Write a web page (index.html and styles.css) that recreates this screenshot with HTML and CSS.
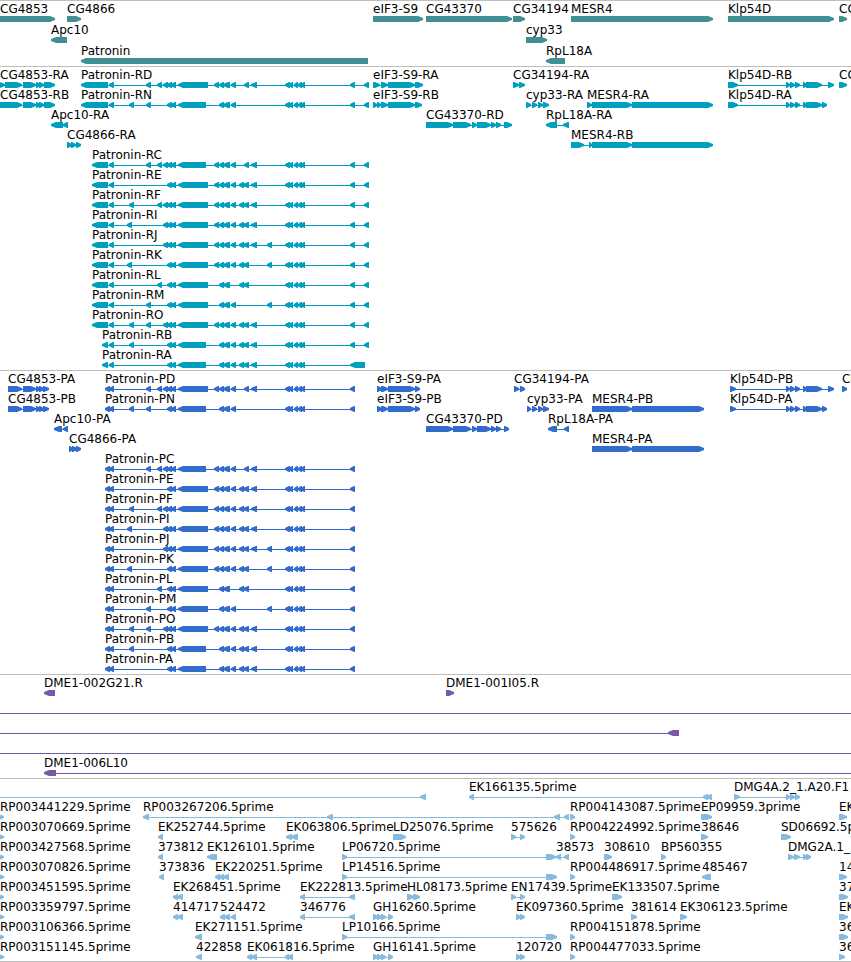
FILE: index.html
```
<!DOCTYPE html>
<html lang="en">
<head>
    <meta charset="UTF-8" />
    <title>Genome Browser</title>
    <link rel="stylesheet" href="styles.css">
</head>
<body>
    <main class="browser">
        <section class="track genes" id="genes"></section>
        <section class="track transcripts" id="transcripts"></section>
        <section class="track cds" id="cds"></section>
        <section class="track clones" id="clones"></section>
        <section class="track ests" id="ests"></section>
    </main>
    <script src="tracks.js"></script>
</body>
</html>
```

FILE: styles.css
```
* {
    margin: 0;
    padding: 0;
    box-sizing: border-box;
}

body {
    background-color: #fff;
    color: #000;
    font-family: "DejaVu Sans", sans-serif;
    font-size: 12px;
    line-height: 14px;
    overflow-x: hidden;
}

.browser {
    border-bottom: 1px solid #bebebe;
}

.track {
    display: flex;
    flex-direction: column;
    padding: 1px 0 2px;
    border-top: 1px solid #bebebe;
    overflow: hidden;
}

.genes {
    gap: 1px;
    color: #3f8f93;
}

.transcripts {
    color: #009fbf;
}

.cds {
    color: #316bcb;
}

.clones {
    color: #765aa8;
}

.ests {
    color: #87bbdd;
    padding-bottom: 1px;
}

.labels {
    position: relative;
    height: 14px;
    color: #000;
}

/* labels sit at the start of their feature on the sequence */
.label {
    position: absolute;
    top: 0;
    white-space: nowrap;
}

.glyphs {
    display: block;
    width: 100%;
    height: 6px;
    fill: currentColor;
    overflow: visible;
}
```

FILE: tracks.js
```
// feature: [name, strand, exons, span]
// span is only given when the feature runs past its visible exons

const END = 5000;

const genes = [
    [
        ['CG4853', '+', '0-55'],
        ['CG4866', '+', '67-81'],
        ['eIF3-S9', '+', '373-423'],
        ['CG43370', '+', '426-512'],
        ['CG34194', '+', '513-525'],
        ['MESR4', '+', '571-713'],
        ['Klp54D', '+', '728-834'],
        ['CG', '+', '839-847']
    ],
    [
        ['Apc10', '-', '51-67'],
        ['cyp33', '+', '526-547']
    ],
    [
        ['Patronin', '-', '81-368'],
        ['RpL18A', '-', '546-565']
    ]
];

// exon groups shared by the Patronin isoforms
const pair = '167-172 171-176';
const triple = '163-168 ' + pair;
const a = '214-219';
const b = '219-224 223-230';
const c = '231-236';
const d = '239-244 243-249';
const e = '251-257';
const f = '267-272';
const g = '285-290 289-293 294-298 298-302 301-305';

const patronin = {
    D: ['146-151 157-162', triple, '178-208', a, b, c, '244-249', e, g],
    N: ['129-134 146-151', pair, '178-206', b, c, g],
    C: ['146-151 157-162', triple, '178-206', a, b, c, '244-249', e, g],
    E: [pair, '178-208', a, b, c, d, e, g],
    F: ['129-134 157-162', triple, '178-208', a, b, c, d, e, g],
    I: ['127-132', triple, '178-208', a, b, c, d, e, g],
    J: [triple, '178-208', a, b, c, d, e, f, g],
    K: ['127-132', pair, '178-208', a, b, c, d, f, g],
    L: ['157-162', pair, '178-208', b, d, g],
    M: ['146-151', pair, '178-208', b, c, f, g],
    O: ['129-134 146-151', triple, '178-208', a, b, c, d, e, g],
    B: ['129-134', pair, '178-206', b, c, d, e, g],
    A: [pair, '178-206', b, c, d, e, g]
};

function patroninRna(id) {
    let start = '92-108';
    if (id === 'D' || id === 'N') start = '81-108';
    if (id === 'A' || id === 'B') start = '102-108';
    const end = id === 'A' ? '350-365' : '350-355 364-369';
    return ['Patronin-R' + id, '-', [start, '109-114', ...patronin[id], end].join(' ')];
}

function patroninCds(id) {
    return ['Patronin-P' + id, '-', ['105-110 109-114', ...patronin[id], '350-355'].join(' ')];
}

const isoforms = ['C', 'E', 'F', 'I', 'J', 'K', 'L', 'M', 'O', 'B', 'A'];
const klp = '786-790 790-795 795-800 803-807 806-822';
const cg43370 = '426-453 453-471 472-477 477-491 491-496 496-501';

const transcripts = [
    [
        ['CG4853-RA', '+', '0-5 5-22 23-36 36-40 39-44 44-55'],
        patroninRna('D'),
        ['eIF3-S9-RA', '+', '373-380 381-388 388-415 415-423'],
        ['CG34194-RA', '+', '513-519 519-525'],
        ['Klp54D-RB', '+', '728-738 ' + klp + ' 828-834'],
        ['CG', '+', '839-847']
    ],
    [
        ['CG4853-RB', '+', '0-22 23-36 36-40 39-44 44-55'],
        patroninRna('N'),
        ['eIF3-S9-RB', '+', '373-377 377-381 381-388 388-415 415-422'],
        ['cyp33-RA', '+', '526-531 532-537 538-543 543-549'],
        ['MESR4-RA', '+', '587-592 592-632 632-713'],
        ['Klp54D-RA', '+', '728-738 ' + klp + ' 822-827']
    ],
    [
        ['Apc10-RA', '-', '51-63 63-68'],
        ['CG43370-RD', '+', cg43370 + ' 504-512'],
        ['RpL18A-RA', '-', '546-557 563-569']
    ],
    [
        ['CG4866-RA', '+', '67-72 71-76 76-81'],
        ['MESR4-RB', '+', '571-584 589-592 592-632 632-713']
    ],
    ...isoforms.map(id => [patroninRna(id)])
];

const cds = [
    [
        ['CG4853-PA', '+', '8-22 23-36 36-40 39-44 43-49'],
        patroninCds('D'),
        ['eIF3-S9-PA', '+', '377-382 381-388 388-415 415-420'],
        ['CG34194-PA', '+', '514-519 520-525'],
        ['Klp54D-PB', '+', '730-736 ' + klp + ' 828-834'],
        ['CG', '+', '842-847']
    ],
    [
        ['CG4853-PB', '+', '8-22 23-36 36-40 39-44 43-49'],
        patroninCds('N'),
        ['eIF3-S9-PB', '+', '377-382 381-388 388-415 415-420'],
        ['cyp33-PA', '+', '527-531 532-537 538-543 543-549'],
        ['MESR4-PB', '+', '592-632 632-704'],
        ['Klp54D-PA', '+', '730-736 ' + klp + ' 822-827']
    ],
    [
        ['Apc10-PA', '-', '54-62 63-68'],
        ['CG43370-PD', '+', cg43370 + ' 504-509'],
        ['RpL18A-PA', '-', '548-557 564-569']
    ],
    [
        ['CG4866-PA', '+', '69-73 72-77 76-81'],
        ['MESR4-PA', '+', '592-632 632-704']
    ],
    ...isoforms.map(id => [patroninCds(id)])
];

const clones = [
    [
        ['DME1-002G21.R', '-', '44-55'],
        ['DME1-001I05.R', '+', '446-454']
    ],
    [['', '+', '', [0, END]]],
    [['', '-', '668-679', [0, 679]]],
    [['', '+', '', [0, END]]],
    [['DME1-006L10', '-', '44-56', [44, END]]]
];

const ests = [
    [
        ['', '-', '420-426', [0, 426]],
        ['EK166135.5prime', '-', '469-474 703-708 706-712'],
        ['DMG4A.2_1.A20.F1', '+', '734-740 786-790 790-795 795-800']
    ],
    [
        ['RP003441229.5prime', '+', '0-4'],
        ['RP003267206.5prime', '-', '143-149 327-333 554-560 564-569'],
        ['RP004143087.5prime', '+', '570-575'],
        ['EP09959.3prime', '+', '701-712'],
        ['EK', '+', '839-847']
    ],
    [
        ['RP003070669.5prime', '+', '0-4'],
        ['EK252744.5prime', '-', '158-163'],
        ['EK063806.5prime', '-', '286-292 291-298'],
        ['LD25076.5prime', '+', '393-406'],
        ['575626', '+', '511-516 520-525'],
        ['RP004224992.5prime', '+', '570-575'],
        ['38646', '+', '701-708'],
        ['SD06692.5prime', '+', '781-791']
    ],
    [
        ['RP003427568.5prime', '+', '0-4'],
        ['373812', '-', '158-163'],
        ['EK126101.5prime', '-', '207-217'],
        ['LP06720.5prime', '+', '342-347 546-556'],
        ['38573', '-', '556-561 564-569'],
        ['308610', '+', '604-612'],
        ['BP560355', '+', '661-666'],
        ['DMG2A.1_', '+', '788-794 794-800 803-807 806-811']
    ],
    [
        ['RP003070826.5prime', '+', '0-4'],
        ['373836', '-', '159-164'],
        ['EK220251.5prime', '-', '215-220 219-224 223-229'],
        ['LP14516.5prime', '+', '342-347 546-557'],
        ['RP004486917.5prime', '+', '570-575'],
        ['485467', '-', '702-711'],
        ['14', '+', '839-847']
    ],
    [
        ['RP003451595.5prime', '+', '0-4'],
        ['EK268451.5prime', '-', '173-178 177-183'],
        ['EK222813.5prime', '-', '300-305 349-355'],
        ['HL08173.5prime', '+', '407-414 413-420'],
        ['EN17439.5prime', '+', '511-516 520-525'],
        ['EK133507.5prime', '+', '612-622'],
        ['37', '+', '839-848']
    ],
    [
        ['RP003359797.5prime', '+', '0-4'],
        ['414717', '-', '173-178 177-183'],
        ['524472', '-', '220-225 224-230 231-236'],
        ['346776', '-', '300-305 349-355'],
        ['GH16260.5prime', '+', '373-378 377-382 381-386 388-393'],
        ['EK097360.5prime', '+', '516-521 520-525'],
        ['381614', '+', '631-637'],
        ['EK306123.5prime', '+', '680-687'],
        ['EK', '+', '839-848']
    ],
    [
        ['RP003106366.5prime', '+', '0-4'],
        ['EK271151.5prime', '-', '195-202'],
        ['LP10166.5prime', '+', '342-347 546-557'],
        ['RP004151878.5prime', '+', '570-575'],
        ['36', '+', '839-848']
    ],
    [
        ['RP003151145.5prime', '+', '0-4'],
        ['422858', '-', '196-202'],
        ['EK061816.5prime', '-', '247-252 251-257 285-289 288-293'],
        ['GH16141.5prime', '+', '373-378 377-382 381-386 388-393'],
        ['120720', '+', '516-521 520-525'],
        ['RP004477033.5prime', '+', '570-575'],
        ['36', '+', '839-845']
    ]
];

// box with a blunt pointed end on the side of the strand
function exonPath(start, end, strand) {
    // an exon at 0 starts before the visible region
    if (start === 0) start = -3;
    const tip = Math.min(6, end - start);
    if (strand === '+') {
        return `M${start} 0H${end - tip + 1}L${end} 2V4L${end - tip + 1} 6H${start}Z`;
    }
    return `M${end} 0H${start + tip - 1}L${start} 2V4L${start + tip - 1} 6H${end}Z`;
}

function drawTrack(id, rows) {
    const track = document.getElementById(id);
    rows.forEach(features => {
        let labels = '';
        let glyphs = '';
        features.forEach(([name, strand, exons, span]) => {
            const parts = exons ? exons.split(' ').map(p => p.split('-').map(Number)) : [];
            const [from, to] = span || [parts[0][0], parts[parts.length - 1][1]];
            if (name) {
                labels += `<span class="label" style="left: ${from}px">${name}</span>`;
            }
            if (span || parts.length > 1) {
                glyphs += `<rect x="${from}" y="3" width="${to - from}" height="1"/>`;
            }
            glyphs += `<path d="${parts.map(p => exonPath(p[0], p[1], strand)).join('')}"/>`;
        });
        const row = document.createElement('div');
        row.className = 'row';
        row.innerHTML = `<div class="labels">${labels}</div><svg class="glyphs">${glyphs}</svg>`;
        track.appendChild(row);
    });
}

drawTrack('genes', genes);
drawTrack('transcripts', transcripts);
drawTrack('cds', cds);
drawTrack('clones', clones);
drawTrack('ests', ests);
```
